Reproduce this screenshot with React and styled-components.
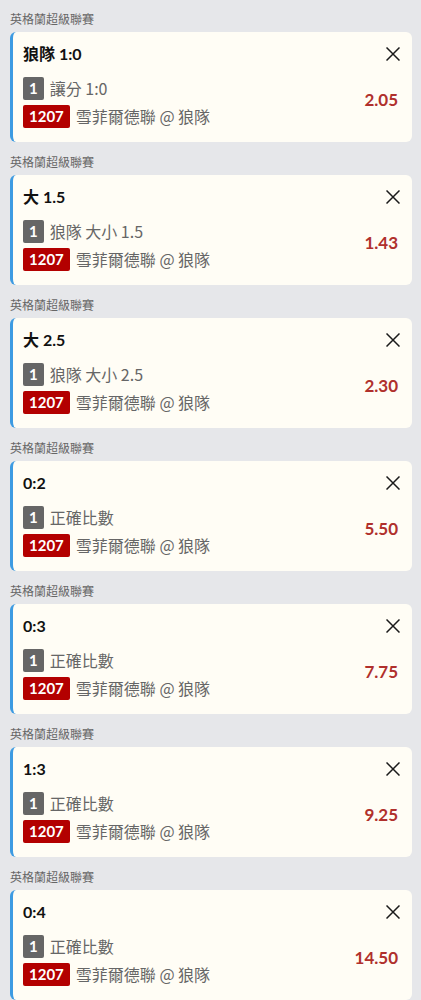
import React from 'react';
import styled, { createGlobalStyle } from 'styled-components';

const GlobalStyle = createGlobalStyle`
	html, body {
		margin: 0;
		padding: 0;
		overflow: hidden;
		background: #e6e7ea;
	}
	body {
		font-family: 'Lato', 'Noto Sans CJK TC', sans-serif;
	}
`;

const Page = styled.div`
	display: flex;
	flex-direction: column;
	padding: 0 9px 0 10px;
	background: #e6e7ea;
	min-height: 1000px;
`;

const Group = styled.div`
	display: flex;
	flex-direction: column;
	padding-top: 10px;
	margin-bottom: 1px;
`;

const League = styled.div`
	font-family: 'Noto Sans CJK TC', sans-serif;
	font-size: 12px;
	line-height: 18px;
	height: 18px;
	color: #666;
	margin-bottom: 4px;
`;

const Card = styled.div`
	display: flex;
	flex-direction: column;
	height: 110px;
	box-sizing: border-box;
	background: #fffdf5;
	border-left: 3px solid #3d9be2;
	border-radius: 6px;
	padding: 10px 12px 0 10px;
`;

const TitleRow = styled.div`
	display: flex;
	align-items: center;
	justify-content: space-between;
	height: 24px;
`;

const Title = styled.div`
	font-size: 16px;
	font-weight: 700;
	color: #111;
	line-height: 24px;
`;

const CloseButton = styled.button`
	border: none;
	background: none;
	padding: 0;
	width: 14px;
	height: 14px;
	display: flex;
	cursor: pointer;
`;

const Body = styled.div`
	display: flex;
	align-items: center;
	justify-content: space-between;
	margin-top: 11px;
`;

const Lines = styled.div`
	display: flex;
	flex-direction: column;
	gap: 5px;
`;

const Line = styled.div`
	display: flex;
	align-items: center;
	gap: 6px;
	font-family: 'Noto Sans CJK TC', sans-serif;
	font-size: 16px;
	color: #666;
	line-height: 23px;
	height: 23px;
`;

const Badge = styled.span`
	display: inline-flex;
	align-items: center;
	justify-content: center;
	height: 23px;
	padding: 0 6px;
	border-radius: 2px;
	background: ${p => (p.red ? '#b30000' : '#666666')};
	color: #fff;
	font-family: 'Lato', sans-serif;
	font-size: 15px;
	font-weight: 700;
`;

const Odds = styled.div`
	font-size: 17px;
	font-weight: 700;
	color: #b0302c;
	margin-right: 2px;
	margin-bottom: 6px;
`;

const bets = [
	{ title: '狼隊 1:0', market: '讓分 1:0', odds: '2.05' },
	{ title: '大 1.5', market: '狼隊 大小 1.5', odds: '1.43' },
	{ title: '大 2.5', market: '狼隊 大小 2.5', odds: '2.30' },
	{ title: '0:2', market: '正確比數', odds: '5.50' },
	{ title: '0:3', market: '正確比數', odds: '7.75' },
	{ title: '1:3', market: '正確比數', odds: '9.25' },
	{ title: '0:4', market: '正確比數', odds: '14.50' },
];

const CloseIcon = () => (
	<svg width="14" height="14" viewBox="0 0 14 14">
		<path d="M0.5 0.5 L13.5 13.5 M13.5 0.5 L0.5 13.5" stroke="#1a1a1a" strokeWidth="1.5" fill="none" />
	</svg>
);

export default function App() {
	return (
		<Page>
			<GlobalStyle />
			{bets.map((bet, i) => (
				<Group key={i}>
					<League>英格蘭超級聯賽</League>
					<Card>
						<TitleRow>
							<Title>{bet.title}</Title>
							<CloseButton>
								<CloseIcon />
							</CloseButton>
						</TitleRow>
						<Body>
							<Lines>
								<Line>
									<Badge>1</Badge>
									{bet.market}
								</Line>
								<Line>
									<Badge red>1207</Badge>
									雪菲爾德聯 @ 狼隊
								</Line>
							</Lines>
							<Odds>{bet.odds}</Odds>
						</Body>
					</Card>
				</Group>
			))}
		</Page>
	);
}
